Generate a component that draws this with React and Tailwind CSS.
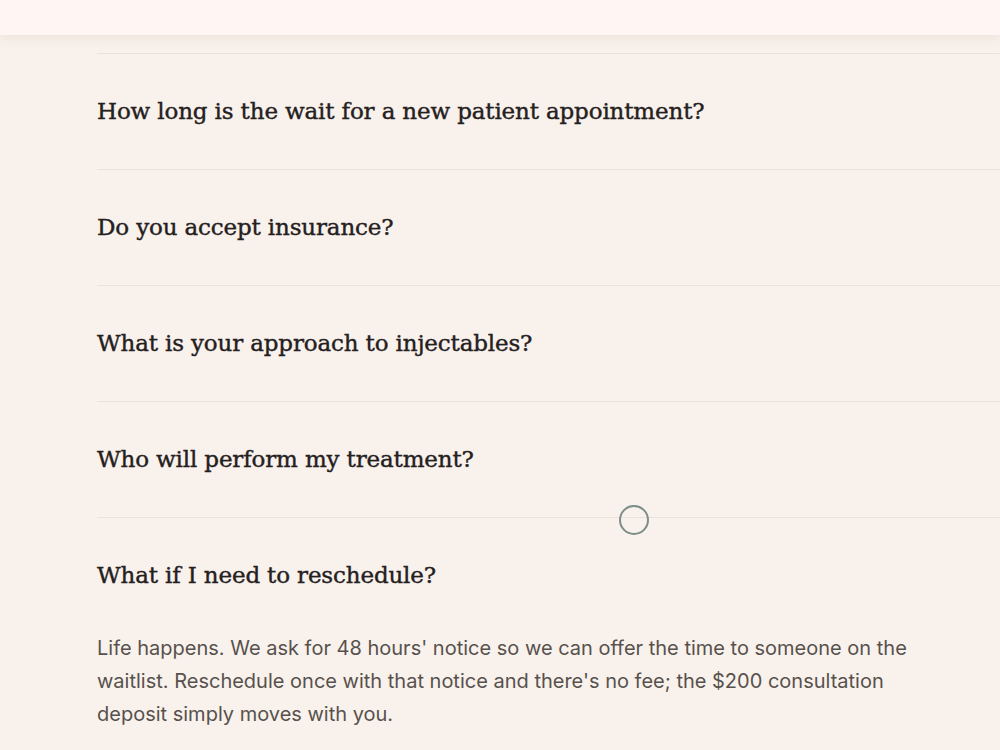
export default function App() {
  const faqs = [
    { q: "How long is the wait for a new patient appointment?" },
    { q: "Do you accept insurance?" },
    { q: "What is your approach to injectables?" },
    { q: "Who will perform my treatment?" },
    {
      q: "What if I need to reschedule?",
      a: "Life happens. We ask for 48 hours' notice so we can offer the time to someone on the waitlist. Reschedule once with that notice and there's no fee; the $200 consultation deposit simply moves with you.",
    },
  ];

  return (
    <div className="relative h-[750px] w-[1000px] overflow-hidden bg-[#f9f1ec]">
      <header className="relative z-10 h-[35px] bg-[#fff6f3] shadow-[0_2px_14px_rgba(120,90,70,0.10)]" />
      <section className="pl-[97px] pt-[18px]">
        {faqs.map((item) => (
          <div key={item.q} className="border-t border-[#ebe2dc]">
            <h3 className="flex h-[115px] items-center font-['DejaVu_Serif',serif] text-[23px] font-normal tracking-[-0.15px] text-[#24201d] [-webkit-text-stroke:0.4px_#24201d]">
              {item.q}
            </h3>
            {item.a && (
              <p className="-mt-[1px] max-w-[840px] font-['Inter',sans-serif] text-[20px] leading-[33px] text-[#57514d]">
                {item.a}
              </p>
            )}
          </div>
        ))}
      </section>
      <div className="absolute left-[619px] top-[505px] h-[30px] w-[30px] rounded-full border-2 border-[#7b8e87]" />
    </div>
  );
}
